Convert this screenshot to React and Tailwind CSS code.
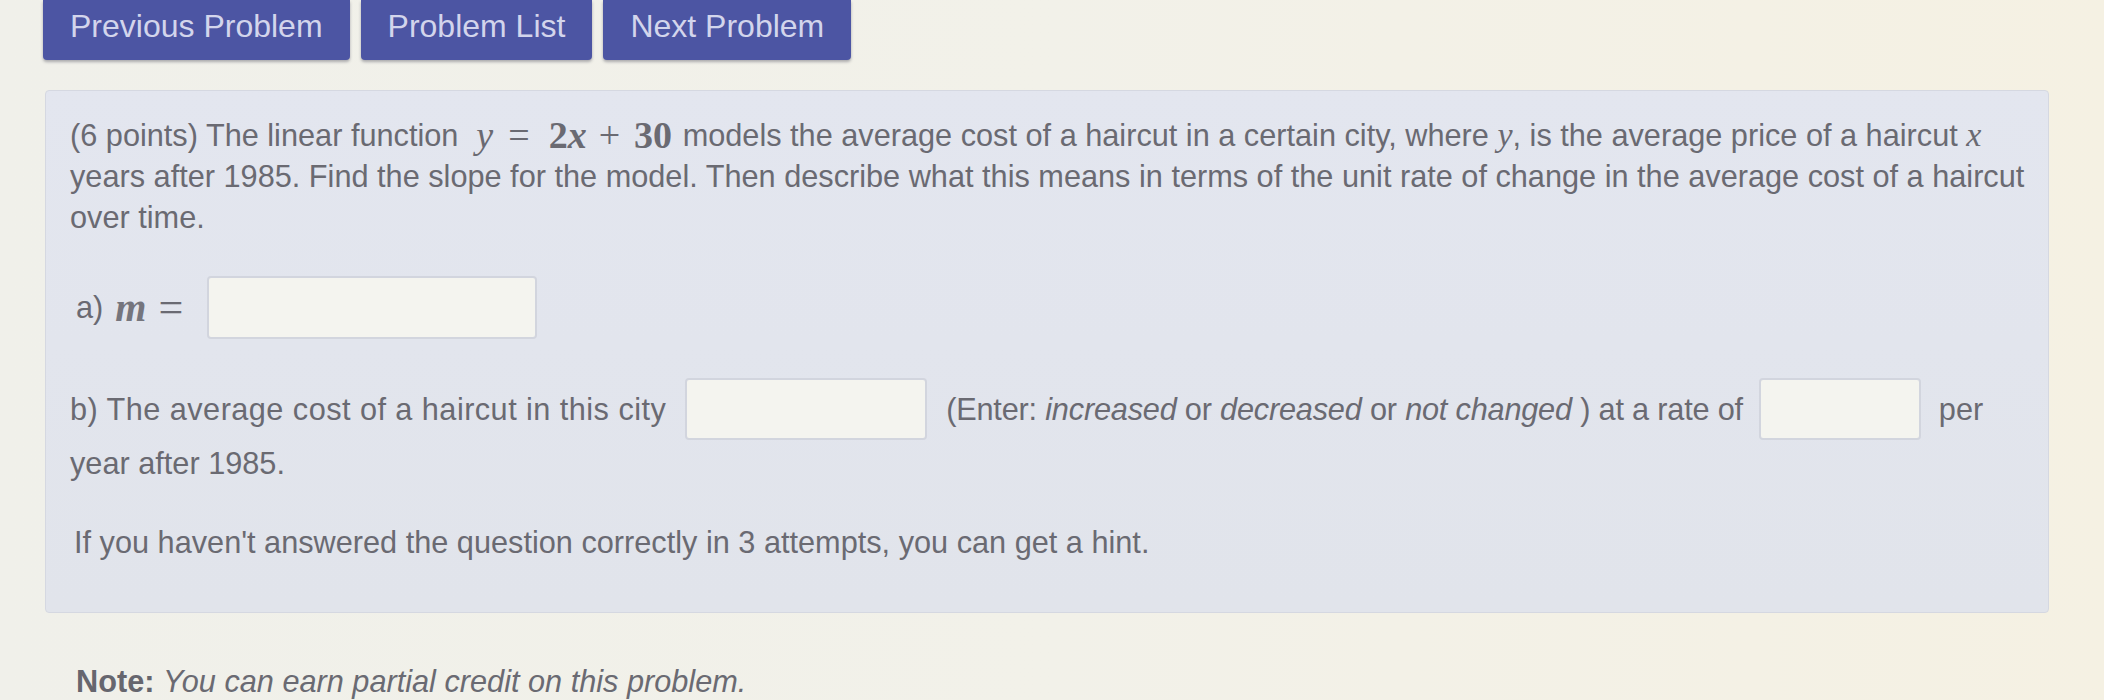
import React from 'react';

const navButtons = ['Previous Problem', 'Problem List', 'Next Problem'];

function NavButton({ label }) {
  return (
    <button className="h-[60px] px-[27px] pb-[8px] flex items-center bg-[#4c55a3] text-[#d3d5ec] text-[32px] rounded-b-[4px] shadow-[0_2px_3px_rgba(40,40,60,0.35)]">
      {label}
    </button>
  );
}

function AnswerBox({ className }) {
  return (
    <input
      type="text"
      className={`h-[62px] shrink-0 rounded-[4px] border-2 border-[#d2d5de] bg-[#f4f4ef] outline-none ${className}`}
    />
  );
}

const serif = { fontFamily: '"Liberation Serif", "DejaVu Serif", serif' };

export default function App() {
  return (
    <div
      className="min-h-screen w-full bg-gradient-to-r from-[#f0f0ea] via-[#f2f1e9] to-[#f5f1e3] text-[#6a6a72] text-[30.7px] leading-[41px]"
      style={{ fontFamily: '"Liberation Sans", Arial, sans-serif' }}
    >
      {/* Navigation */}
      <div className="flex gap-[11px] pl-[43px]">
        {navButtons.map((b) => (
          <NavButton key={b} label={b} />
        ))}
      </div>

      {/* Problem panel */}
      <div className="ml-[45px] mt-[30px] w-[2004px] h-[523px] rounded-[4px] border border-[#d5d8e1] bg-gradient-to-b from-[#e3e6ef] to-[#e1e4eb] pl-[24px] pt-[23px]">
        <p className="whitespace-nowrap">
          (6 points) The linear function
          <span className="inline-block ml-[18px] mr-[2px] text-[38px] leading-[30px] align-[-2px]" style={serif}>
            <i>y</i>
            <span className="ml-[15px]">=</span>
            <b className="ml-[19px]">2<i>x</i></b>
            <span className="ml-[12px]">+</span>
            <b className="ml-[14px]">30</b>
          </span>{' '}
          models the average cost of a haircut in a certain city, where{' '}
          <i className="text-[34px]" style={serif}>y</i>, is the average price of a haircut{' '}
          <i className="text-[34px]" style={serif}>x</i>
          <br />
          years after 1985. Find the slope for the model. Then describe what this means in terms of the unit rate of change in the average cost of a haircut
          <br />
          over time.
        </p>

        <div className="mt-[38px] flex items-center h-[63px] pl-[6px]">
          <span>a)</span>
          <i className="ml-[12px] text-[40px] font-bold text-[#75757d]" style={serif}>m</i>
          <span className="ml-[12px] text-[44px] font-light" style={serif}>=</span>
          <AnswerBox className="ml-[24px] w-[330px] h-[63px]" />
        </div>

        <div className="mt-[39px] flex items-center h-[62px] whitespace-nowrap">
          <span className="tracking-[0.45px]">b) The average cost of a haircut in this city</span>
          <AnswerBox className="ml-[19px] w-[242px]" />
          <span className="ml-[19px] tracking-[-0.2px]">
            (Enter: <i>increased</i> or <i>decreased</i> or <i>not changed</i> ) at a rate of
          </span>
          <AnswerBox className="ml-[16px] w-[162px]" />
          <span className="ml-[18px]">per</span>
        </div>
        <p className="mt-[3px]">year after 1985.</p>

        <p className="mt-[38px] pl-[4px]">
          If you haven't answered the question correctly in 3 attempts, you can get a hint.
        </p>
      </div>

      <p className="ml-[76px] mt-[48px]">
        <b className="text-[#66666e]">Note:</b> <i>You can earn partial credit on this problem.</i>
      </p>
    </div>
  );
}
